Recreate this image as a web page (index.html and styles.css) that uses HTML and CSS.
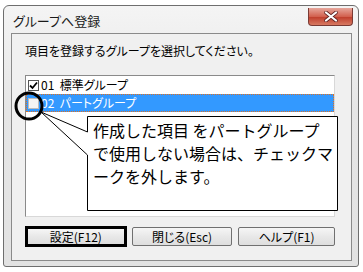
FILE: index.html
```html
<!DOCTYPE html>
<html lang="ja">
<head>
<meta charset="utf-8">
<link rel="stylesheet" href="styles.css">
</head>
<body>
<div class="window">
  <div class="titlebar">
    <span class="title">グループへ登録</span>
    <div class="close"><svg width="16" height="11" viewBox="0 0 16 11"><path d="M3 1.5 L13 9.5 M13 1.5 L3 9.5" stroke="#5a2020" stroke-width="3.6" stroke-linecap="round"/><path d="M3 1.5 L13 9.5 M13 1.5 L3 9.5" stroke="#ffffff" stroke-width="2.2" stroke-linecap="round"/></svg></div>
  </div>
  <div class="client">
    <p class="prompt">項目を登録するグループを選択してください。</p>
    <div class="list">
      <div class="row">
        <span class="check on"><svg width="9" height="9" viewBox="0 0 9 9"><path d="M1 4.5 L3.5 7 L8 1.5" stroke="#000" stroke-width="1.8" fill="none"/></svg></span>
        <span class="label">01&nbsp;&nbsp;標準グループ</span>
      </div>
      <div class="row selected">
        <span class="check"></span>
        <span class="label">02&nbsp;&nbsp;パートグループ</span>
      </div>
    </div>
    <div class="buttons">
      <button class="btn default"><span>設定(F12)</span></button>
      <button class="btn"><span>閉じる(Esc)</span></button>
      <button class="btn"><span>ヘルプ(F1)</span></button>
    </div>
  </div>
</div>
<svg class="annot" width="363" height="272" viewBox="0 0 363 272">
  <path d="M87.5 116.5 H337.5 V210.5 H87.5 V155 L41 112 L87.5 132 Z" fill="#ffffff" stroke="#000" stroke-width="1"/>
  <ellipse cx="29" cy="106" rx="13" ry="13" fill="none" stroke="#000" stroke-width="3"/>
</svg>
<div class="note">作成した項目 をパートグループ<br>で使用しない場合は、チェックマ<br>ークを外します。</div>
</body>
</html>
```

FILE: styles.css
```css
html, body {
  margin: 0;
  padding: 0;
  background: #ffffff;
  width: 363px;
  height: 272px;
  overflow: hidden;
  font-family: "Noto Sans CJK JP", "Liberation Sans", sans-serif;
}
.window {
  margin: 5px 0 0 3px;
  width: 341px;
  height: 255px;
  border: 1px solid #6e6e6e;
  border-radius: 6px 6px 3px 3px;
  background: linear-gradient(#f4f4f4, #e6e6e6 40%, #e2e2e2);
  padding: 0 6px 5px 7px;
  box-sizing: content-box;
  display: flex;
  flex-direction: column;
}
.titlebar {
  height: 27px;
  display: flex;
  align-items: flex-start;
  justify-content: space-between;
}
.title {
  font-size: 13px;
  color: #1a1a1a;
  margin-top: 8px;
  margin-left: 2px;
  line-height: 14px;
  font-feature-settings: "palt";
}
.close {
  width: 45px;
  height: 18px;
  margin-top: 2px;
  margin-right: -1px;
  border: 1px solid #7a3a34;
  border-top: none;
  border-radius: 0 0 4px 4px;
  background: linear-gradient(#e7a79c, #d2614f 50%, #c0402e 55%, #d87a62);
  display: flex;
  align-items: center;
  justify-content: center;
  box-sizing: border-box;
}
.client {
  flex: 1;
  background: #f0f0f0;
  border: 1px solid #8a8a8a;
  padding: 0 16px 0 13px;
  display: flex;
  flex-direction: column;
}
.prompt {
  margin: 10px 0 0 0;
  font-size: 12px;
  line-height: 14px;
  color: #000;
  font-feature-settings: "palt";
}
.list {
  margin-top: 17px;
  height: 140px;
  background: #fff;
  border: 1px solid #8a8a8a;
  border-right-color: #d8d8d8;
  border-bottom-color: #d8d8d8;
  padding-top: 0;
}
.row {
  height: 18px;
  display: flex;
  align-items: center;
  font-size: 12px;
  color: #000;
  box-sizing: border-box;
}
.row.selected {
  background: #3399ff;
  color: #fff;
  border: 1px dotted #e07020;
}
.check {
  width: 11px;
  height: 11px;
  margin-left: 2px;
  border: 1px solid #555;
  background: #fff;
  box-sizing: border-box;
  display: flex;
  align-items: center;
  justify-content: center;
}
.row.selected .check {
  margin-left: 1px;
  border-color: #bbb;
  background: #f4f4f4;
}
.label {
  margin-left: 2px;
  line-height: 14px;
  font-feature-settings: "palt";
}
.buttons {
  margin-top: 10px;
  display: flex;
  gap: 3px;
}
.btn {
  width: 102px;
  height: 19px;
  padding: 0;
  font-family: inherit;
  font-size: 12px;
  color: #000;
  background: linear-gradient(#f6f6f6, #e8e8e8 50%, #dedede);
  border: 1px solid #707070;
  border-radius: 2px;
  display: flex;
  align-items: center;
  justify-content: center;
  box-sizing: border-box;
  font-feature-settings: "palt";
}
.btn + .btn { margin-left: 2px; }
.btn:last-child { width: 98px; margin-left: 3px; }
.btn.default {
  width: 103px;
  height: 21px;
  margin-top: -1px;
  border: 3px solid #000;
  border-radius: 0;
}
.annot {
  position: absolute;
  left: 0;
  top: 0;
}
.note {
  position: absolute;
  left: 93px;
  top: 119px;
  font-size: 16px;
  line-height: 23px;
  color: #000;
  white-space: nowrap;
}
```
